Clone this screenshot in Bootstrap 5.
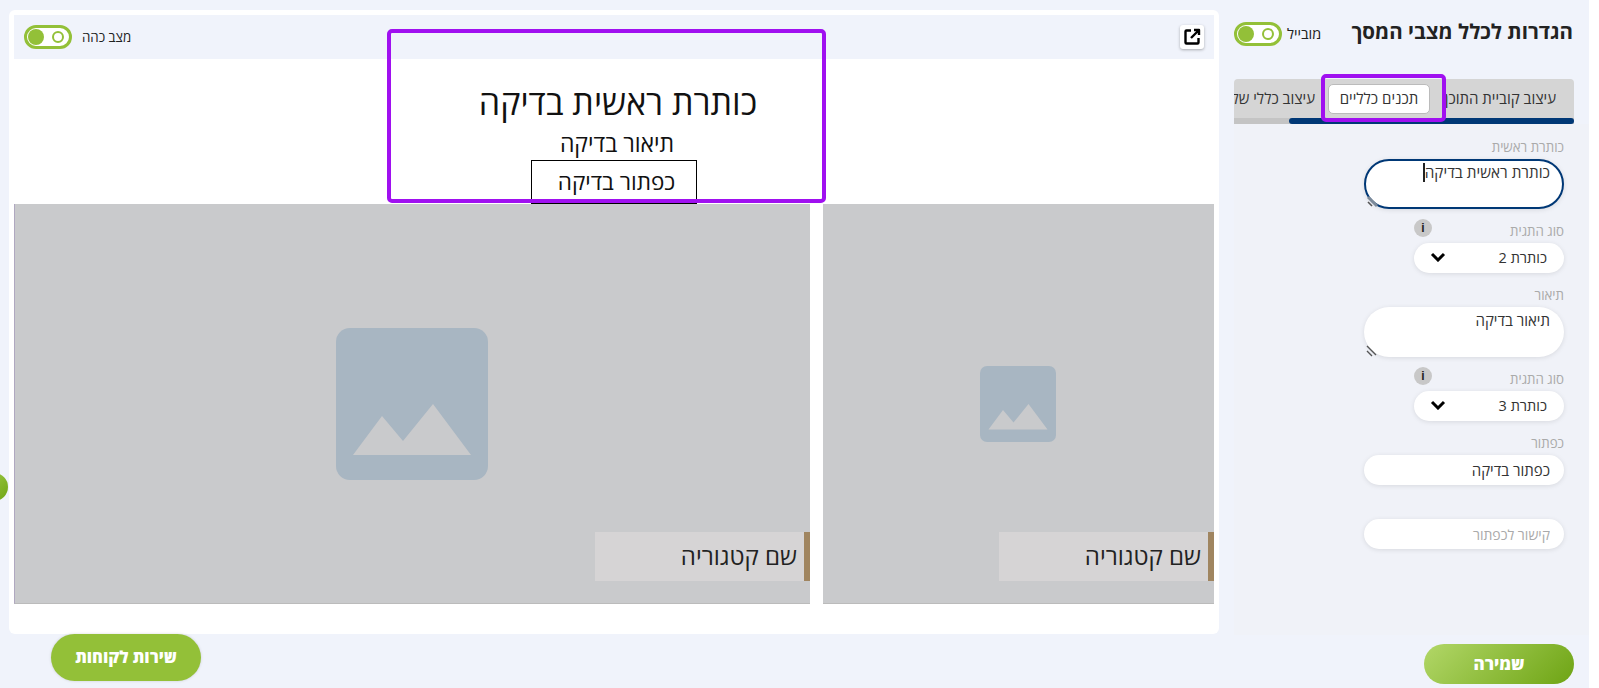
<!DOCTYPE html>
<html lang="he" dir="rtl">
<head>
    <meta charset="UTF-8">
    <meta name="viewport" content="width=device-width, initial-scale=1.0">
    <title>הגדרות לכלל מצבי המסך</title>
    <link href="https://cdn.jsdelivr.net/npm/bootstrap@5.3.0/dist/css/bootstrap.min.css" rel="stylesheet">
    <style>
        html, body { height: 100%; }
        body {
            background: #fff;
            font-family: "Open Sans", "Liberation Sans", sans-serif;
            color: #222;
            overflow: hidden;
        }
        .page-shell {
            position: relative;
            width: 1589px;
            height: 688px;
            margin-right: 10px;
            background: #f0f3fb;
            padding: 10px 0 0 0;
        }
        .top-area { height: 624px; gap: 15px; }

        /* settings column */
        .settings-col { width: 355px; flex: none; }
        .settings-head { height: 69px; padding: 9px 16px 0 0; }
        .settings-title { font-size: 20.5px; font-weight: 700; margin: 0; color: #222; line-height: 24px; }
        .head-switch { margin-top: 3px; gap: 5px; }
        .switch-label { font-size: 14.5px; line-height: 16px; color: #222; }
        .green-switch {
            width: 48px; height: 24px; border: 3px solid #93c038; border-radius: 12px;
            background: #fff; padding: 0 1px; flex: none;
        }
        .green-switch .knob-on { width: 16px; height: 16px; border-radius: 50%; background: #93c038; }
        .green-switch .knob-off { width: 12px; height: 12px; border-radius: 50%; border: 2px solid #93c038; margin-right: 4px; }

        .tabs-strip {
            width: 340px; margin-right: 15px; height: 45px;
            background: #d5d5d5; border-radius: 4px 4px 0 0;
            overflow: hidden; position: relative;
        }
        .tab-row { height: 39px; padding-right: 18px; white-space: nowrap; font-size: 15px; color: #333; }
        .tab-clip { width: 126px; overflow: hidden; flex: none; }
        .tab-on { width: 102px; height: 30px; background: #fff; border: 1px solid #bbb; border-radius: 5px; flex: none; margin-left: 13px; }
        .tab-track { height: 6px; background: #c4c4c4; }
        .tab-thumb { height: 6px; width: 285px; background: #003876; border-radius: 3px; }

        .form-panel { background: #f0f2f8; height: 511px; padding: 15px 25px 0 25px; }
        .field-label { font-size: 13.3px; line-height: 16px; color: #aaa; height: 16px; }
        .field-box {
            background: #fff; border: 0; outline: 0; display: block;
            font-size: 15px; line-height: 20px; color: #333;
            box-shadow: 0 1px 5px rgba(0, 0, 0, .1);
            font-family: inherit;
        }
        .area-box { width: 200px; height: 50px; border-radius: 25px; padding: 3px 14px; margin-bottom: 14px; position: relative; }
        .area-focus { border: 2px solid #003876; padding: 1px 12px; font-size: 15.3px; }
        .caret-bar { display: inline-block; width: 2px; height: 19px; background: #222; vertical-align: -4px; }
        .grip { position: absolute; left: 2px; bottom: 0; width: 13px; height: 13px; }
        .area-focus .grip { left: 1px; bottom: -1px; }
        .select-box { width: 150px; height: 30px; border-radius: 15px; padding: 0 17px 0 16px; margin-bottom: 14px; font-size: 14.5px; }
        .select-box svg { margin-bottom: 2px; }
        .input-box { width: 200px; height: 30px; border-radius: 15px; padding: 0 14px; line-height: 30px; margin-bottom: 34px; }
        .input-box::placeholder { color: #aaa; opacity: 1; font-size: 14px; }
        .info-dot {
            width: 18px; height: 18px; border-radius: 50%; background: #c8c8c8; color: #222;
            font: 700 12px/18px "Liberation Sans", sans-serif; text-align: center; margin-top: -4px; margin-left: 50px;
        }
        .tag-row { width: 200px; height: 16px; }

        /* preview column */
        .preview-wrap { width: 1210px; flex: none; background: #fff; border-radius: 6px; padding: 5px; }
        .preview-bar { height: 44px; background: #f0f3fb; padding: 0 10px; }
        .dark-switch { gap: 10px; }
        .dark-switch .switch-label { font-size: 13.3px; }
        .open-btn { width: 24px; height: 24px; background: #fff; border-radius: 3px; box-shadow: 0 1px 3px rgba(0,0,0,.3); }
        .hero-block { height: 145px; padding-top: 21px; color: #111; }
        .hero-title { font-size: 34px; font-weight: 400; line-height: 44px; margin: 0 0 5px; padding-left: 8px; }
        .hero-desc { font-size: 23px; line-height: 28px; margin: 0 0 3px; padding-left: 6px; }
        .hero-btn { width: 166px; height: 44px; border: 1px solid #000; background: #fff; font-size: 22.5px; line-height: 42px; color: #111; padding-left: 5px; }
        .tile-row { gap: 13px; height: 400px; }
        .photo-tile {
            position: relative; height: 400px; background: #c9cacc;
            border-left: 1px solid #b0a8c0; border-bottom: 1px solid #bbb;
        }
        .photo-tile svg { margin-right: 2px; }
        .tile-small { width: 391px; border-left: 0; }
        .tile-big { width: 796px; }
        .cat-tag {
            position: absolute; right: 0; top: 328px; width: 215px; height: 49px;
            background: #d6d4d5; border-right: 6px solid #a08560;
            font-size: 24px; line-height: 47px; padding-right: 7px; color: #222;
        }

        /* highlighted frames */
        .purple-frame { position: absolute; border: 4px solid #a010f0; border-radius: 5px; pointer-events: none; }
        .frame-hero { left: 387px; top: 29px; width: 439px; height: 174px; }
        .frame-tab { left: 1321px; top: 74px; width: 125px; height: 48px; }

        /* bottom buttons */
        .save-btn, .help-btn { position: absolute; color: #fff; font-weight: 800; border: 0; text-align: center; }
        .save-btn {
            left: 1424px; top: 644px; width: 150px; height: 40px; border-radius: 20px; font-size: 17px;
            background: linear-gradient(135deg, #b2d768, #6ea414);
        }
        .help-btn {
            left: 51px; top: 634px; width: 150px; height: 47px; border-radius: 24px; font-size: 16.5px;
            background: #93c038; box-shadow: 0 0 3px rgba(0,0,0,.15);
        }
        .side-dot { position: absolute; left: -20px; top: 473px; width: 28px; height: 28px; border-radius: 50%; background: linear-gradient(135deg, #a5cf4e, #6ea414); }
    </style>
</head>
<body>
    <div class="page-shell">
        <div class="d-flex top-area">
            <!-- הגדרות -->
            <div class="settings-col">
                <div class="settings-head d-flex justify-content-between align-items-start">
                    <h1 class="settings-title">הגדרות לכלל מצבי המסך</h1>
                    <div class="head-switch d-flex align-items-center">
                        <span class="switch-label">מובייל</span>
                        <div class="green-switch d-flex align-items-center justify-content-between flex-row-reverse">
                            <div class="knob-on"></div><div class="knob-off"></div>
                        </div>
                    </div>
                </div>
                <div class="tabs-strip">
                    <div class="tab-row d-flex align-items-center">
                        <span class="tab-clip">עיצוב קוביית התוכן</span>
                        <div class="tab-on d-flex align-items-center justify-content-center">תכנים כלליים</div>
                        <span>עיצוב כללי של העמוד</span>
                    </div>
                    <div class="tab-track"><div class="tab-thumb"></div></div>
                </div>
                <div class="form-panel">
                    <div class="field-label">כותרת ראשית</div>
                    <div class="field-box area-box area-focus mt-1">כותרת ראשית בדיקה<span class="caret-bar"></span>
                        <svg class="grip" viewBox="0 0 13 13"><path d="M1 2l9 9" stroke="#7c8a9a" stroke-width="3" fill="none"/><path d="M1 7l4 4" stroke="#555" stroke-width="1.6" fill="none"/></svg>
                    </div>
                    <div class="tag-row d-flex justify-content-between">
                        <div class="field-label">סוג התגית</div>
                        <div class="info-dot">i</div>
                    </div>
                    <div class="field-box select-box d-flex align-items-center justify-content-between mt-1">
                        <span>כותרת 2</span>
                        <svg width="16" height="10" viewBox="0 0 16 10"><path d="M2 2l6 6 6-6" stroke="#000" stroke-width="3" fill="none"/></svg>
                    </div>
                    <div class="field-label">תיאור</div>
                    <div class="field-box area-box mt-1">תיאור בדיקה
                        <svg class="grip" viewBox="0 0 13 13"><path d="M1 2l9 9M1 7l5 5" stroke="#555" stroke-width="1.4" fill="none"/></svg>
                    </div>
                    <div class="tag-row d-flex justify-content-between">
                        <div class="field-label">סוג התגית</div>
                        <div class="info-dot">i</div>
                    </div>
                    <div class="field-box select-box d-flex align-items-center justify-content-between mt-1">
                        <span>כותרת 3</span>
                        <svg width="16" height="10" viewBox="0 0 16 10"><path d="M2 2l6 6 6-6" stroke="#000" stroke-width="3" fill="none"/></svg>
                    </div>
                    <div class="field-label">כפתור</div>
                    <div class="field-box input-box mt-1">כפתור בדיקה</div>
                    <input class="field-box input-box" type="text" placeholder="קישור לכפתור">
                </div>
            </div>

            <!-- תצוגה מקדימה -->
            <div class="preview-wrap">
                <div class="preview-bar d-flex justify-content-between align-items-center">
                    <div class="open-btn d-flex align-items-center justify-content-center">
                        <svg width="18" height="18" viewBox="0 0 18 18" fill="none" stroke="#000" stroke-width="2.4" stroke-linejoin="round"><path d="M8 2.5H3.5a1 1 0 0 0-1 1v11a1 1 0 0 0 1 1h11a1 1 0 0 0 1-1V10"/><path d="M11 2h5v5M16 2L8 10"/></svg>
                    </div>
                    <div class="dark-switch d-flex align-items-center">
                        <span class="switch-label">מצב כהה</span>
                        <div class="green-switch d-flex align-items-center justify-content-between flex-row-reverse">
                            <div class="knob-on"></div><div class="knob-off"></div>
                        </div>
                    </div>
                </div>
                <div class="hero-block text-center">
                    <h2 class="hero-title">כותרת ראשית בדיקה</h2>
                    <p class="hero-desc">תיאור בדיקה</p>
                    <div class="hero-btn mx-auto">כפתור בדיקה</div>
                </div>
                <div class="tile-row d-flex">
                    <div class="photo-tile tile-small d-flex align-items-center justify-content-center">
                        <svg width="76" height="76" viewBox="0 0 152 152"><rect width="152" height="152" rx="14" fill="#a8b6c2"/><path d="M17 127L46 88 67 113 97 76 135 127z" fill="#c9cacc"/></svg>
                        <div class="cat-tag">שם קטגוריה</div>
                    </div>
                    <div class="photo-tile tile-big d-flex align-items-center justify-content-center">
                        <svg width="152" height="152" viewBox="0 0 152 152"><rect width="152" height="152" rx="14" fill="#a8b6c2"/><path d="M17 127L46 88 67 113 97 76 135 127z" fill="#c9cacc"/></svg>
                        <div class="cat-tag">שם קטגוריה</div>
                    </div>
                </div>
            </div>
        </div>

        <div class="purple-frame frame-hero"></div>
        <div class="purple-frame frame-tab"></div>
        <div class="side-dot"></div>
        <button class="help-btn" type="button">שירות לקוחות</button>
        <button class="save-btn" type="button">שמירה</button>
    </div>

    <script src="https://cdn.jsdelivr.net/npm/bootstrap@5.3.0/dist/js/bootstrap.bundle.min.js"></script>
</body>
</html>
